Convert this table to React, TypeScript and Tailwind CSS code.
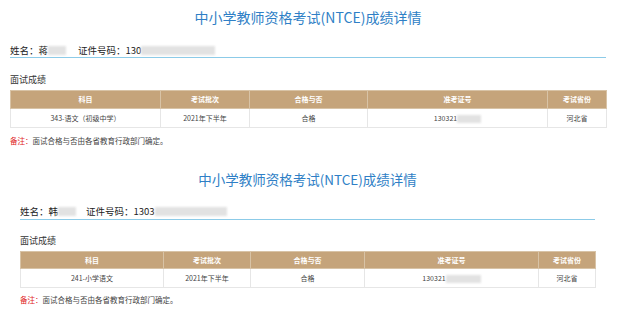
import React from "react";

type P = {
  name: string;
  nameBlur: string;
  idPrefix: string;
  idBlur: string;
  gap: string;
  subject: string;
  ticketBlur: string;
  wrap: string;
  title: string;
  info: string;
  sub: string;
  table: string;
  head: string;
  row: string;
  note: string;
  cols: number[];
};

const font = { fontFamily: '"Noto Sans CJK SC", "Microsoft YaHei", sans-serif' };

function Blur({ w }: { w: string }) {
  return <span className={`inline-block align-middle h-[9px] bg-[#e2e2e2] blur-[1px] ${w}`} />;
}

function Panel(p: P) {
  return (
    <div className={p.wrap}>
      <div className={p.title}>中小学教师资格考试(NTCE)成绩详情</div>
      <div className={p.info}>
        <span>姓名：{p.name}</span>
        <Blur w={p.nameBlur} />
        <span className={p.gap}>证件号码：{p.idPrefix}</span>
        <Blur w={p.idBlur} />
      </div>
      <div className={p.sub}>面试成绩</div>
      <table className={p.table}>
        <colgroup>
          {p.cols.map((c, i) => (
            <col key={i} style={{ width: c }} />
          ))}
        </colgroup>
        <thead>
          <tr className={p.head}>
            {["科目", "考试批次", "合格与否", "准考证号", "考试省份"].map((h) => (
              <th key={h} className="border border-[#d8c3a6] font-bold text-white text-center p-0">
                {h}
              </th>
            ))}
          </tr>
        </thead>
        <tbody>
          <tr className={p.row}>
            <td className="border border-[#e6e6e6] text-center p-0">{p.subject}</td>
            <td className="border border-[#e6e6e6] text-center p-0">2021年下半年</td>
            <td className="border border-[#e6e6e6] text-center p-0">合格</td>
            <td className="border border-[#e6e6e6] text-center p-0">
              130321
              <span className={`inline-block align-middle h-[8px] bg-[#e2e2e2] blur-[0.8px] ${p.ticketBlur}`} />
            </td>
            <td className="border border-[#e6e6e6] text-center p-0">河北省</td>
          </tr>
        </tbody>
      </table>
      <div className={p.note}>
        <span className="text-[#e0231c]">备注：</span>
        <span className="text-[#444]">面试合格与否由各省教育行政部门确定。</span>
      </div>
    </div>
  );
}

export default function App() {
  return (
    <div className="w-[619px] h-[316px] bg-white overflow-hidden text-[#333]" style={font}>
      <Panel
        name="蒋"
        nameBlur="w-[18px]"
        idPrefix="130"
        idBlur="w-[74px]"
        gap="ml-[12px]"
        subject="343-语文（初级中学）"
        ticketBlur="w-[24px]"
        wrap="mx-[10px] w-[596px] pt-[7px]"
        title="text-center text-[14px] leading-[20px] text-[#2f7fc6]"
        info="mt-[16px] h-[15px] leading-[14px] text-[9.5px] text-[#222] border-b border-[#8ccbe8] flex items-center"
        sub="mt-[16px] text-[9px] leading-[12px] text-[#333]"
        table="mt-[4px] w-[596px] table-fixed border-collapse text-[7px] text-[#444]"
        head="h-[18px] bg-[#c5a47b]"
        row="h-[19px] bg-white"
        note="mt-[7px] text-[7.5px] leading-[12px]"
        cols={[150, 89, 118, 180, 59]}
      />
      <Panel
        name="韩"
        nameBlur="w-[18px]"
        idPrefix="1303"
        idBlur="w-[72px]"
        gap="ml-[10px]"
        subject="241-小学语文"
        ticketBlur="w-[35px]"
        wrap="ml-[20px] w-[575px] pt-[22px]"
        title="text-center text-[13.5px] leading-[20px] text-[#2f7fc6]"
        info="mt-[14px] h-[17px] leading-[16px] text-[9.5px] text-[#222] border-b border-[#8ccbe8] flex items-center"
        sub="mt-[15px] text-[9px] leading-[12px] text-[#333]"
        table="mt-[4px] w-[575px] table-fixed border-collapse text-[7px] text-[#444]"
        head="h-[17px] bg-[#c5a47b]"
        row="h-[19px] bg-white"
        note="mt-[6px] text-[7.5px] leading-[12px]"
        cols={[143, 87, 114, 174, 57]}
      />
    </div>
  );
}
